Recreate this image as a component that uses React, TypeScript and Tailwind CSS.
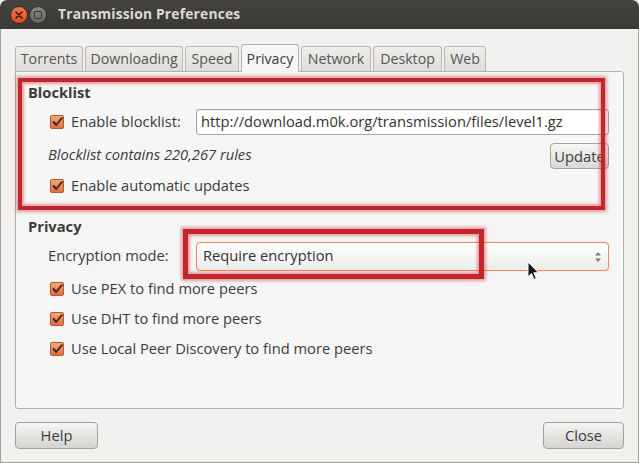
import React from "react"

const font = { fontFamily: "'Open Sans', 'DejaVu Sans', sans-serif" }

function CheckBox() {
  return (
    <span className="w-[14px] h-[14px] rounded-[2px] border border-[#b9552b] bg-gradient-to-b from-[#f3a67c] to-[#e06f3d] flex items-center justify-center shrink-0">
      <svg width="11" height="10" viewBox="0 0 11 10">
        <path d="M1.5 5 L4.2 8 L9.8 1.2" fill="none" stroke="#3d2a22" strokeWidth="1.9" strokeLinecap="round" strokeLinejoin="round" />
      </svg>
    </span>
  )
}

function CheckRow({ label, className = "" }: { label: string; className?: string }) {
  return (
    <div className={`flex items-center gap-[7px] pl-[34px] h-[20px] ${className}`}>
      <CheckBox />
      <span className="text-[14.7px] text-[#3c3c3c] pb-[2px]">{label}</span>
    </div>
  )
}

const tabs = [
  { name: "Torrents", w: "w-[68px]" },
  { name: "Downloading", w: "w-[98px]" },
  { name: "Speed", w: "w-[54px]" },
  { name: "Privacy", w: "w-[58px]", active: true },
  { name: "Network", w: "w-[70px]" },
  { name: "Desktop", w: "w-[69px]" },
  { name: "Web", w: "w-[42px]" },
]

export default function App() {
  return (
    <div className="relative w-[639px] h-[463px] bg-[#f2f1f0] overflow-hidden" style={font}>
      {/* title bar */}
      <div className="h-[29px] bg-gradient-to-b from-[#45443f] to-[#3a3935] rounded-t-[7px] flex items-center pl-[10px]">
        <span className="w-[18px] h-[18px] rounded-full bg-gradient-to-b from-[#f4774a] to-[#d94d1c] border border-[#2f2e2a] flex items-center justify-center">
          <svg width="8" height="8" viewBox="0 0 8 8">
            <path d="M1 1 L7 7 M7 1 L1 7" stroke="#3a1a0e" strokeWidth="1.6" strokeLinecap="round" />
          </svg>
        </span>
        <span className="ml-[1px] w-[18px] h-[18px] rounded-full bg-gradient-to-b from-[#8a8984] to-[#66655f] border border-[#2f2e2a] flex items-center justify-center">
          <span className="w-[8px] h-[8px] border-[1.5px] border-[#3a3935] rounded-[1px]" />
        </span>
        <span className="ml-[11px] text-[13.8px] font-bold text-[#dfdbd2] tracking-[0.2px]">Transmission Preferences</span>
      </div>

      <div className="h-[434px] border-l border-r border-b border-[#a3a19c] flex flex-col px-[14px]">
        {/* tabs */}
        <div className="flex items-end gap-[2px] h-[42px] pt-[14px] relative z-10">
          {tabs.map((t) =>
            t.active ? (
              <div
                key={t.name}
                className={`${t.w} h-[28px] -mb-[1px] bg-[#f6f6f6] border border-b-0 border-[#b3b1ac] rounded-t-[3px] flex items-center justify-center text-[14.2px] text-[#3c3c3c]`}
              >
                {t.name}
              </div>
            ) : (
              <div
                key={t.name}
                className={`${t.w} h-[25px] bg-gradient-to-b from-[#efeeec] to-[#dedcd8] border border-b-0 border-[#bab8b3] rounded-t-[3px] flex items-center justify-center text-[14.2px] text-[#555]`}
              >
                {t.name}
              </div>
            )
          )}
        </div>

        {/* notebook page */}
        <div className="h-[338px] bg-[#f6f6f6] border border-[#b3b1ac] rounded-b-[3px] rounded-tr-[3px] text-[#3c3c3c]">
          <div className="mt-[12px] pl-[12px] h-[18px] pb-[2px] flex items-center text-[14.7px] font-bold">Blocklist</div>

          <div className="mt-[7px] h-[26px] flex items-center pr-[14px]">
            <div className="flex items-center gap-[7px] pl-[34px] w-[180px]">
              <CheckBox />
              <span className="text-[14.7px] whitespace-nowrap pb-[1px]">Enable blocklist:</span>
            </div>
            <div className="flex-1 h-[26px] bg-white border border-[#a7a5a0] rounded-[3px] shadow-[inset_0_1px_1px_rgba(0,0,0,0.08)] flex items-center pl-[4px] pb-[1px] text-[14.7px] text-[#333] whitespace-nowrap overflow-hidden">
              http://download.m0k.org/transmission/files/level1.gz
            </div>
          </div>

          <div className="mt-[8px] h-[26px] flex items-center justify-between pl-[32px] pr-[14px]">
            <span className="text-[14.7px] italic pb-[3px]">Blocklist contains 220,267 rules</span>
            <button className="w-[59px] h-[26px] rounded-[4px] border border-[#a4a29d] bg-gradient-to-b from-[#f7f7f6] to-[#dbd9d5] text-[14.7px] text-[#3c3c3c]">
              Update
            </button>
          </div>

          <CheckRow label="Enable automatic updates" className="mt-[7px]" />

          <div className="mt-[22px] pl-[12px] h-[18px] pb-[2px] flex items-center text-[14.7px] font-bold">Privacy</div>

          <div className="mt-[6px] h-[29px] flex items-center pr-[14px]">
            <span className="pl-[32px] w-[180px] text-[14.7px] pb-[2px]">Encryption mode:</span>
            <div className="flex-1 h-[29px] rounded-[4px] border border-[#ec8a5d] bg-gradient-to-b from-white to-[#ececeb] shadow-[0_0_1px_rgba(233,120,70,0.6)] flex items-center justify-between pl-[6px] pr-[6px] text-[14.7px] text-[#333]">
              <span className="pb-[2px]">Require encryption</span>
              <svg width="8" height="12" viewBox="0 0 8 12">
                <path d="M4 1 L7 4.5 L1 4.5 Z M4 11 L7 7.5 L1 7.5 Z" fill="#7a7a7a" />
              </svg>
            </div>
          </div>

          <CheckRow label="Use PEX to find more peers" className="mt-[8px]" />
          <CheckRow label="Use DHT to find more peers" className="mt-[10px]" />
          <CheckRow label="Use Local Peer Discovery to find more peers" className="mt-[10px]" />
        </div>

        {/* dialog buttons */}
        <div className="mt-[13px] flex justify-between">
          <button className="w-[83px] h-[27px] rounded-[4px] border border-[#a4a29d] bg-gradient-to-b from-[#f5f5f4] to-[#d6d4d0] text-[14.7px] text-[#3c3c3c]">
            Help
          </button>
          <button className="w-[81px] h-[27px] rounded-[4px] border border-[#a4a29d] bg-gradient-to-b from-[#f5f5f4] to-[#d6d4d0] text-[14.7px] text-[#3c3c3c]">
            Close
          </button>
        </div>
      </div>

      {/* red markup frames drawn over the dialog */}
      <div className="absolute left-[18px] top-[78px] w-[587px] h-[132px] border-[4px] border-[#c2262c] shadow-[0_0_3px_2px_rgba(200,50,55,0.45),inset_0_0_3px_2px_rgba(200,50,55,0.45)] pointer-events-none" />
      <div className="absolute left-[183px] top-[229px] w-[301px] h-[50px] border-[5px] border-[#c2262c] shadow-[0_0_3px_2px_rgba(200,50,55,0.45),inset_0_0_3px_2px_rgba(200,50,55,0.45)] pointer-events-none" />

      {/* mouse pointer */}
      <svg className="absolute left-[527px] top-[261px]" width="13" height="20" viewBox="0 0 13 20">
        <path d="M1 1 L1 16 L4.5 12.5 L7 18.5 L9.3 17.5 L6.8 11.8 L11.5 11.8 Z" fill="#111" stroke="#fff" strokeWidth="1" strokeLinejoin="round" />
      </svg>
    </div>
  )
}
